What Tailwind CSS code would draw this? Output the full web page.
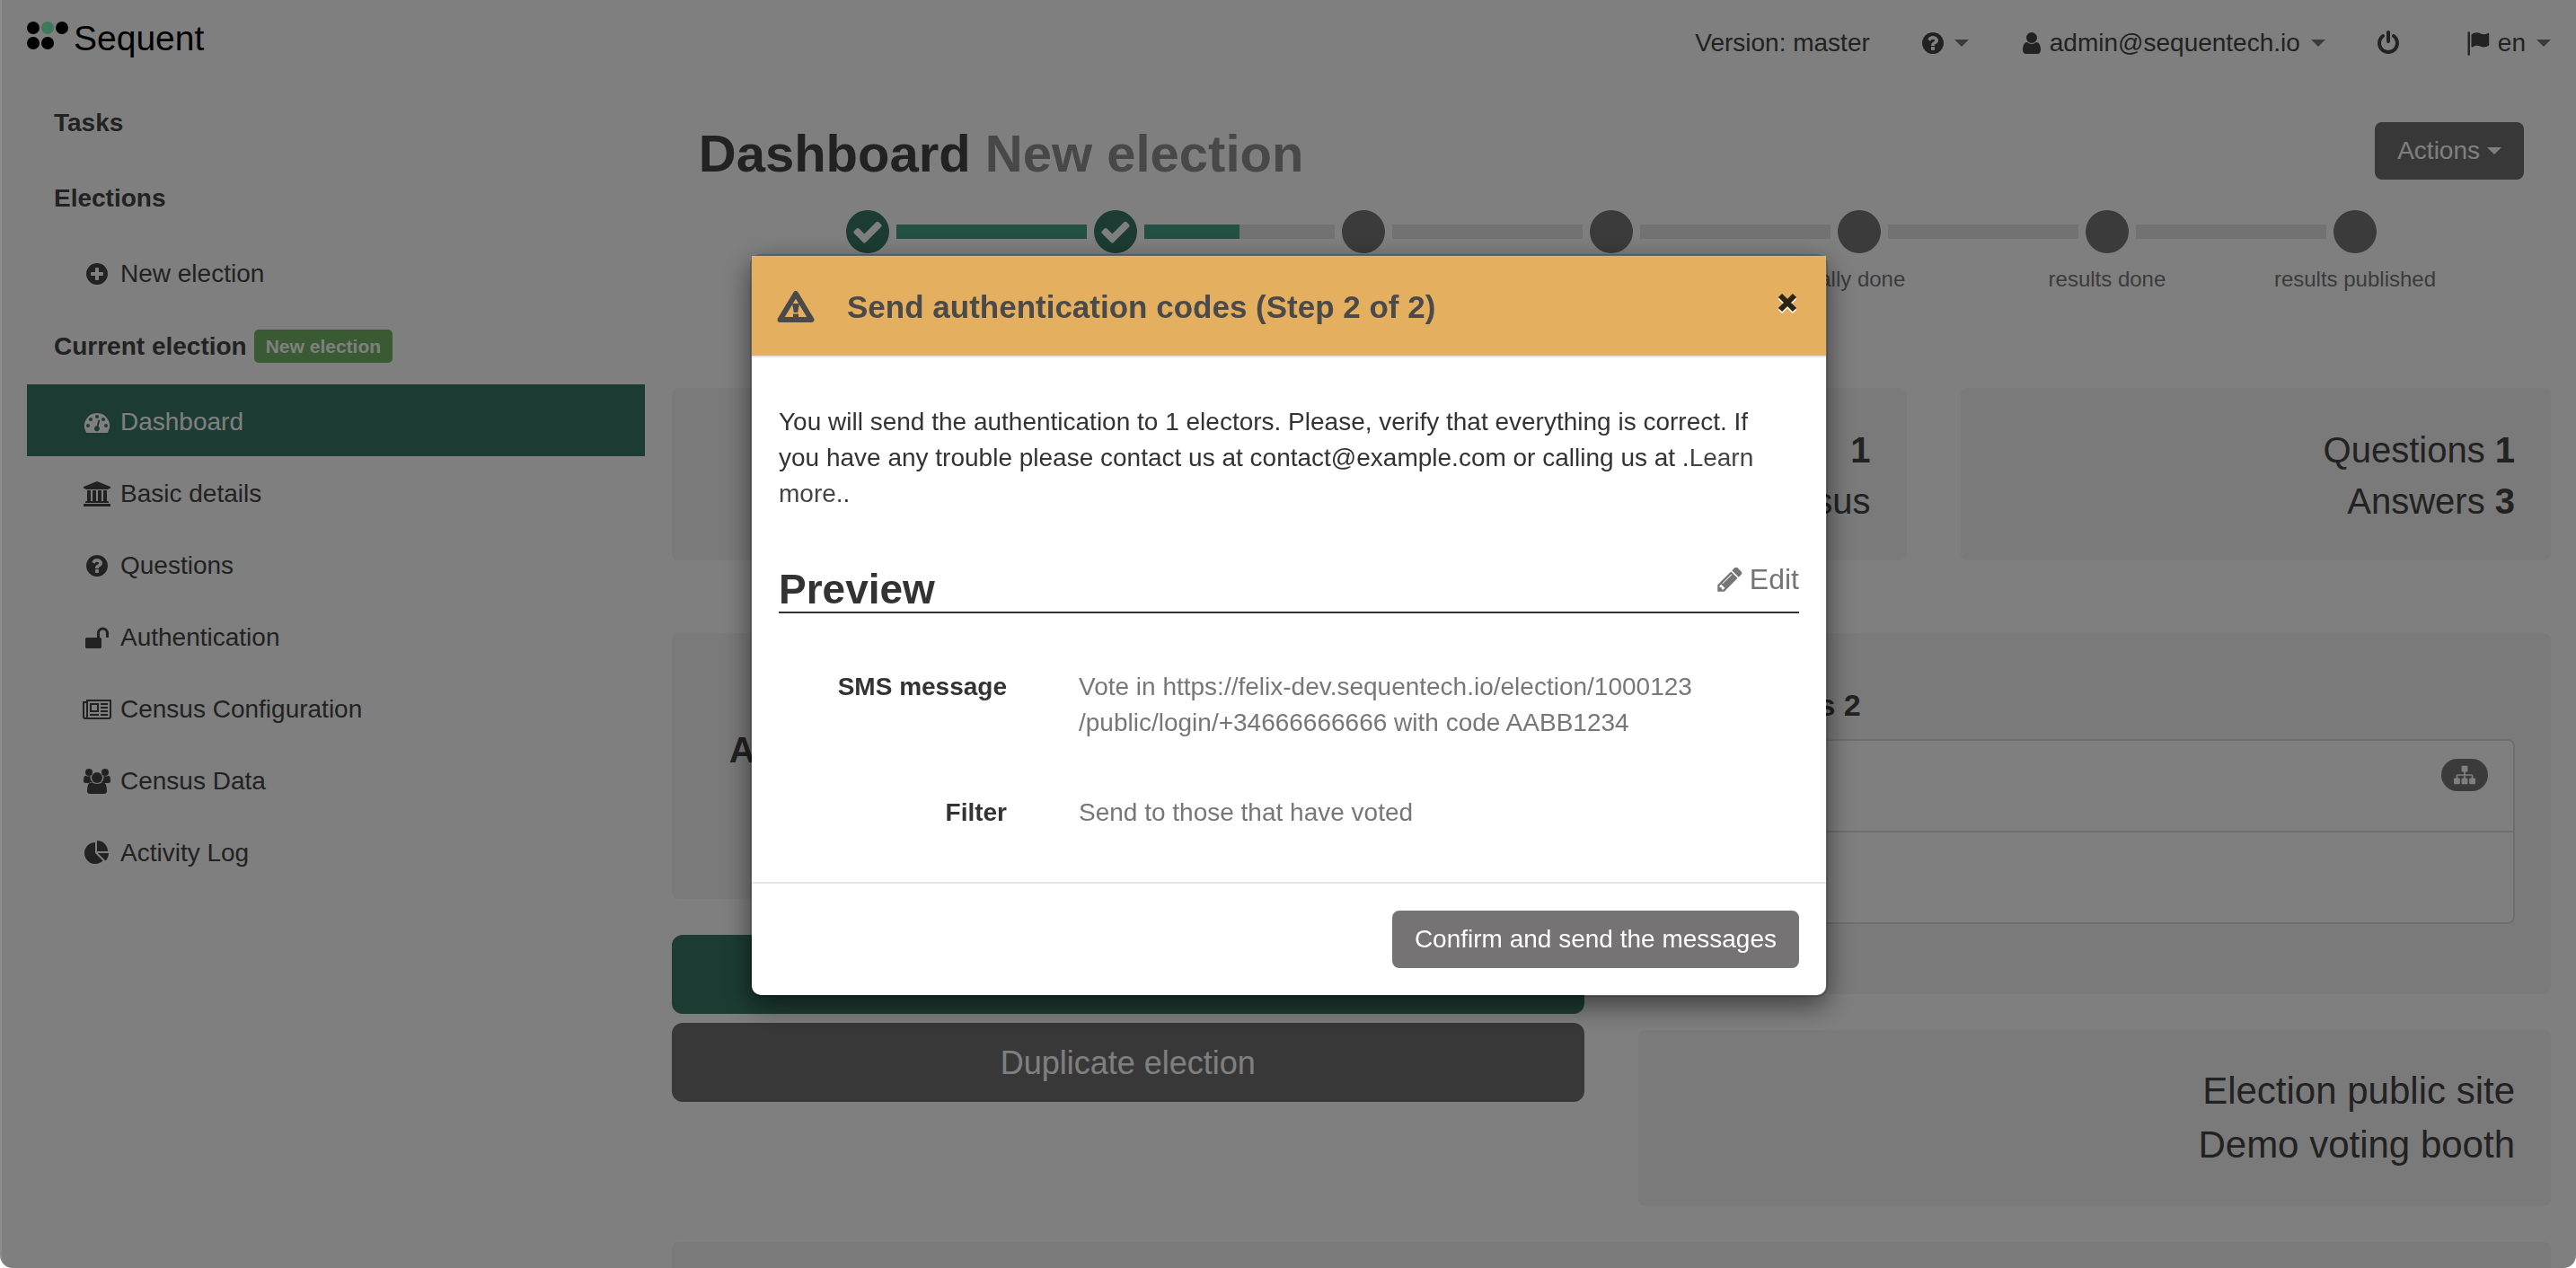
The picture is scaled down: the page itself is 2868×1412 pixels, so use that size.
<!DOCTYPE html>
<html lang="en">
<head>
<meta charset="utf-8">
<meta name="viewport" content="width=device-width, initial-scale=1">
<title>Sequent - Dashboard</title>
<script src="https://cdn.jsdelivr.net/npm/@tailwindcss/browser@4"></script>
</head>
<body class="h-screen overflow-hidden bg-white pl-px font-['Liberation_Sans',Arial,sans-serif] text-[28px] leading-10 text-[#444]">

<!-- icon set -->
<svg class="hidden" xmlns="http://www.w3.org/2000/svg">
  <symbol id="i-question" viewBox="0 0 1792 1792"><path d="M1024 1376v-192q0-14-9-23t-23-9h-192q-14 0-23 9t-9 23v192q0 14 9 23t23 9h192q14 0 23-9t9-23zm256-672q0-88-55.5-163t-138.5-116-170-41q-243 0-371 213-15 24 8 42l132 100q7 6 19 6 16 0 25-12 53-68 86-92 34-24 86-24 48 0 85.5 26t37.5 59q0 38-20 61t-68 45q-63 28-115.5 86.5t-52.5 125.5v36q0 14 9 23t23 9h192q14 0 23-9t9-23q0-19 21.5-49.5t54.5-49.5q32-18 49-28.5t46-35 44.5-48 28-60.5 12.5-81zm384 192q0 209-103 385.5t-279.5 279.5-385.5 103-385.5-103-279.5-279.5-103-385.5 103-385.5 279.5-279.5 385.5-103 385.5 103 279.5 279.5 103 385.5z"/></symbol>
  <symbol id="i-plus" viewBox="0 0 1792 1792"><path d="M1344 960v-128q0-26-19-45t-45-19h-256v-256q0-26-19-45t-45-19h-128q-26 0-45 19t-19 45v256h-256q-26 0-45 19t-19 45v128q0 26 19 45t45 19h256v256q0 26 19 45t45 19h128q26 0 45-19t19-45v-256h256q26 0 45-19t19-45zm320-64q0 209-103 385.5t-279.5 279.5-385.5 103-385.5-103-279.5-279.5-103-385.5 103-385.5 279.5-279.5 385.5-103 385.5 103 279.5 279.5 103 385.5z"/></symbol>
  <symbol id="i-user" viewBox="0 0 1792 1792"><path d="M1536 1399q0 109-62.5 187t-150.5 78h-854q-88 0-150.5-78t-62.5-187q0-85 8.5-160.5t31.5-152 58.5-131 94-89 134.5-34.5q131 128 313 128t313-128q76 0 134.5 34.5t94 89 58.5 131 31.5 152 8.5 160.5zm-256-887q0 159-112.5 271.5t-271.5 112.5-271.5-112.5-112.5-271.5 112.5-271.5 271.5-112.5 271.5 112.5 112.5 271.5z"/></symbol>
  <symbol id="i-power" viewBox="0 0 1792 1792"><path d="M1664 896q0 156-61 298t-164 245-245 164-298 61-298-61-245-164-164-245-61-298q0-182 80.5-343t226.5-270q43-32 95.5-25t83.5 50q32 42 24.5 94.5t-49.5 84.5q-98 74-151.5 181t-53.5 228q0 104 40.5 198.5t109.5 163.5 163.5 109.5 198.5 40.5 198.5-40.5 163.5-109.5 109.5-163.5 40.5-198.5q0-121-53.5-228t-151.5-181q-42-32-49.5-84.5t24.5-94.5q31-43 84-50t95 25q146 109 226.5 270t80.5 343zm-640-768v640q0 52-38 90t-90 38-90-38-38-90v-640q0-52 38-90t90-38 90 38 38 90z"/></symbol>
  <symbol id="i-flag" viewBox="0 0 28 28"><path d="M2.500 2.500a1.200 1.200 0 0 1 2.400 0v24.500a.8.8 0 0 1-.8.8h-.8a.8.800 0 0 1-.8-.8zM6.500 4.500c3-2 6.500-3 10-1.200 3.200 1.700 5.800 1 8.300-.4.8-.4 1.400 0 1.400.8v12.300c0 .5-.2.8-.7 1.100-3 1.700-6 2.100-9.200.5-3-1.500-5.600-1-8.700.8-.7.4-1.100.1-1.100-.6z"/></symbol>
  <symbol id="i-pencil" viewBox="0 0 1792 1792"><path d="M491 1536l91-91-235-235-91 91v107h128v128h107zm523-928q0-22-22-22-10 0-17 7l-542 542q-7 7-7 17 0 22 22 22 10 0 17-7l542-542q7-7 7-17zm-54-192l416 416-832 832h-416v-416zm683 96q0 53-37 90l-166 166-416-416 166-165q36-38 90-38 53 0 91 38l235 234q37 39 37 91z"/></symbol>
  <symbol id="i-pie" viewBox="0 0 1792 1792"><path d="M768 890l546 546q-106 108-247.5 168t-298.5 60q-209 0-385.5-103t-279.5-279.5-103-385.5 103-385.5 279.5-279.5 385.500-103v762zm187 6h773q0 157-60 298.500t-168 247.500zm709-128h-768v-768q209 0 385.500 103t279.500 279.500 103 385.500z"/></symbol>
  <symbol id="i-sitemap" viewBox="0 0 1792 1792"><path d="M1792 1248v320q0 40-28 68t-68 28h-320q-40 0-68-28t-28-68v-320q0-40 28-68t68-28h96v-192h-512v192h96q40 0 68 28t28 68v320q0 40-28 68t-68 28h-320q-40 0-68-28t-28-68v-320q0-40 28-68t68-28h96v-192h-512v192h96q40 0 68 28t28 68v320q0 40-28 68t-68 28h-320q-40 0-68-28t-28-68v-320q0-40 28-68t68-28h96v-192q0-52 38-90t90-38h512v-192h-96q-40 0-68-28t-28-68v-320q0-40 28-68t68-28h320q40 0 68 28t28 68v320q0 40-28 68t-68 28h-96v192h512q52 0 90 38t38 90v192h96q40 0 68 28t28 68z"/></symbol>
  <symbol id="i-gauge" viewBox="0 0 28 28"><path fill-rule="evenodd" d="M14 4a14 14 0 0 1 11.800 21.500q-.4.500-1 .5H3.200q-.6 0-1-.5A14 14 0 0 1 14 4zM4 16a2 2 0 1 0 0 4 2 2 0 0 0 0-4zM7 9a2 2 0 1 0 0 4 2 2 0 0 0 0-4zM14 6a2 2 0 1 0 0 4 2 2 0 0 0 0-4zM21 9a2 2 0 1 0 0 4 2 2 0 0 0 0-4zM24 16a2 2 0 1 0 0 4 2 2 0 0 0 0-4zM15.300 12l-1.600 6.300a3 3 0 1 0 1.900.5l1.600-6.300a1 1 0 0 0-1.900-.5z"/></symbol>
  <symbol id="i-bank" viewBox="0 0 30 28"><path d="M15 0l15 6v2h-2q0 1-1 1H3Q2 9 2 8H0V6zM4 10h4v12h2V10h4v12h2V10h4v12h2V10h4v12h1q1 0 1 1v1H2v-1q0-1 1-1h1zM1 25h28q1 0 1 1v2H0v-2q0-1 1-1z"/></symbol>
  <symbol id="i-unlock" viewBox="0 0 28 28"><path d="M2.500 14h2V14h9.500V9a6.500 6.500 0 0 1 13 0v4q0 1-1 1h-1q-1 0-1-1V9a3.500 3.500 0 0 0-7 0v5h.5q1.500 0 1.500 1.500v9q0 1.500-1.500 1.500h-15Q1 26 1 24.500v-9Q1 14 2.500 14z"/></symbol>
  <symbol id="i-news" viewBox="0 0 32 28"><path fill-rule="evenodd" d="M4 3h28v19q0 3-3 3H3q-3 0-3-3V5h4zM4 7H2v15q0 1 1 1t1-1zM6 5v17q0 .6-.2 1H29q1 0 1-1V5zM8 7h10v10H8zm2 2v6h6V9zM8 19h10v2H8zM20 7h8v2h-8zM20 11h8v2h-8zM20 15h8v2h-8zM20 19h8v2h-8z"/></symbol>
  <symbol id="i-users" viewBox="0 0 30 28"><circle cx="6" cy="4" r="4"/><circle cx="24" cy="4" r="4"/><circle cx="15" cy="10" r="6"/><path d="M7.500 10q0-1 .2-2Q4 9 2 7.700 0 8 0 13.500 0 16 2.500 16H8q1-1 2-1.200Q7.500 13 7.500 10zM22.500 10q0-1-.2-2Q26 9 28 7.700q2 .3 2 5.800 0 2.500-2.500 2.500H22q-1-1-2-1.200 2.500-1.800 2.500-4.800zM9 15q6 4 12 0 5 0 5 9.500 0 3.500-3.500 3.500h-15Q4 28 4 24.500 4 15 9 15z"/></symbol>
  <symbol id="i-check" viewBox="0 0 1792 1792"><path d="M1671 566q0 40-28 68l-724 724-136 136q-28 28-68 28t-68-28l-136-136-362-362q-28-28-28-68t28-68l136-136q28-28 68-28t68 28l294 295 656-657q28-28 68-28t68 28l136 136q28 28 28 68z"/></symbol>
  <symbol id="i-caret" viewBox="0 0 16 8"><path d="M0 0h16L8 8z"/></symbol>
</svg>

<header class="flex h-[95px] items-start justify-between pl-[29px] pr-7">
  <a href="#" class="flex items-start gap-1.5 pt-5 text-[39px] leading-[46px] text-black">
    <svg class="mt-1 h-[31px] w-[46px]" viewBox="0 0 46 31" aria-hidden="true"><circle cx="7" cy="7" r="7"/><circle cx="23" cy="7" r="7" fill="#78f4b4"/><circle cx="39" cy="7" r="7"/><circle cx="7" cy="24" r="7"/><circle cx="23" cy="24" r="7"/></svg>
    Sequent
  </a>
  <nav class="flex items-center gap-14 pt-7">
    <a href="#">Version: master</a>
    <button class="flex items-center gap-2.5" aria-label="Help"><svg class="size-7 fill-current"><use href="#i-question"/></svg><svg class="h-2 w-4 fill-[#777]"><use href="#i-caret"/></svg></button>
    <button class="flex items-center gap-1.5"><svg class="size-7 fill-current"><use href="#i-user"/></svg>admin@sequentech.io<svg class="ml-1.5 h-2 w-4 fill-[#777]"><use href="#i-caret"/></svg></button>
    <button aria-label="Log out"><svg class="size-7 fill-current"><use href="#i-power"/></svg></button>
    <button class="ml-4 flex items-center gap-2"><svg class="size-7 fill-current"><use href="#i-flag"/></svg>en<svg class="ml-1 h-2 w-4 fill-[#777]"><use href="#i-caret"/></svg></button>
  </nav>
</header>

<div class="flex">
  <aside class="w-1/4 shrink-0 pl-[29px]">
    <nav>
      <h2 class="flex h-[84px] items-center pl-[30px] font-bold">Tasks</h2>
      <h2 class="flex h-[84px] items-center pl-[30px] font-bold">Elections</h2>
      <a href="#" class="flex h-[84px] items-center gap-2 pl-[60px]"><span class="flex w-9 justify-center"><svg class="size-7 fill-current"><use href="#i-plus"/></svg></span>New election</a>
      <h2 class="flex h-[81px] items-center gap-2 pb-1 pl-[30px] font-bold">Current election <span class="rounded-[5px] bg-[#72b464] px-[13px] text-[21px] leading-[37px] text-white">New election</span></h2>
      <a href="#" class="flex h-20 items-center gap-2 bg-[#387866] pl-[60px] pt-1 text-white"><span class="flex w-9 justify-center"><svg class="size-7 fill-current"><use href="#i-gauge"/></svg></span>Dashboard</a>
      <a href="#" class="flex h-20 items-center gap-2 pl-[60px] pt-1"><span class="flex w-9 justify-center"><svg class="h-7 w-[30px] fill-current"><use href="#i-bank"/></svg></span>Basic details</a>
      <a href="#" class="flex h-20 items-center gap-2 pl-[60px] pt-1"><span class="flex w-9 justify-center"><svg class="size-7 fill-current"><use href="#i-question"/></svg></span>Questions</a>
      <a href="#" class="flex h-20 items-center gap-2 pl-[60px] pt-1"><span class="flex w-9 justify-center"><svg class="size-7 fill-current"><use href="#i-unlock"/></svg></span>Authentication</a>
      <a href="#" class="flex h-20 items-center gap-2 pl-[60px] pt-1"><span class="flex w-9 justify-center"><svg class="h-7 w-8 fill-current"><use href="#i-news"/></svg></span>Census Configuration</a>
      <a href="#" class="flex h-20 items-center gap-2 pl-[60px] pt-1"><span class="flex w-9 justify-center"><svg class="h-7 w-[30px] fill-current"><use href="#i-users"/></svg></span>Census Data</a>
      <a href="#" class="flex h-20 items-center gap-2 pl-[60px] pt-1"><span class="flex w-9 justify-center"><svg class="size-7 fill-current"><use href="#i-pie"/></svg></span>Activity Log</a>
    </nav>
  </aside>

  <main class="min-w-0 flex-1 pl-[30px] pr-7">
    <div class="flex items-center justify-between pl-[30px] pr-[30px] pt-[41px]">
      <h1 class="pt-1.5 text-[58px] font-bold leading-[58px]">Dashboard <small class="text-[58px] text-[#919191]">New election</small></h1>
      <button class="flex h-16 items-center gap-2 rounded-lg bg-[#737171] px-[25px] text-white">Actions <svg class="h-2 w-4 fill-current"><use href="#i-caret"/></svg></button>
    </div>

    <!-- election progress -->
    <ol class="mt-[34px] grid grid-cols-7 px-20 text-center text-[24px] leading-[34px] text-[#777]">
      <li class="relative"><span class="mx-auto flex size-12 items-center justify-center rounded-full bg-[#387866]"><svg class="size-9 fill-white"><use href="#i-check"/></svg></span><span class="absolute left-[calc(50%+32px)] right-[calc(32px-50%)] top-4 h-4 bg-[#499f89]"></span><span class="mt-3 block">created</span></li>
      <li class="relative"><span class="mx-auto flex size-12 items-center justify-center rounded-full bg-[#387866]"><svg class="size-9 fill-white"><use href="#i-check"/></svg></span><span class="absolute left-[calc(50%+32px)] right-[calc(32px-50%)] top-4 h-4 bg-[#e5e5e5]"><span class="block h-full w-1/2 bg-[#499f89]"></span></span><span class="mt-3 block">registered</span></li>
      <li class="relative"><span class="mx-auto block size-12 rounded-full bg-[#777]"></span><span class="absolute left-[calc(50%+32px)] right-[calc(32px-50%)] top-4 h-4 bg-[#e5e5e5]"></span><span class="mt-3 block">started</span></li>
      <li class="relative"><span class="mx-auto block size-12 rounded-full bg-[#777]"></span><span class="absolute left-[calc(50%+32px)] right-[calc(32px-50%)] top-4 h-4 bg-[#e5e5e5]"></span><span class="mt-3 block">stopped</span></li>
      <li class="relative"><span class="mx-auto block size-12 rounded-full bg-[#777]"></span><span class="absolute left-[calc(50%+32px)] right-[calc(32px-50%)] top-4 h-4 bg-[#e5e5e5]"></span><span class="mt-3 block">tally done</span></li>
      <li class="relative"><span class="mx-auto block size-12 rounded-full bg-[#777]"></span><span class="absolute left-[calc(50%+32px)] right-[calc(32px-50%)] top-4 h-4 bg-[#e5e5e5]"></span><span class="mt-3 block">results done</span></li>
      <li><span class="mx-auto block size-12 rounded-full bg-[#777]"></span><span class="mt-3 block">results published</span></li>
    </ol>

    <section class="mt-[104px] grid grid-cols-3 gap-[60px] text-right text-[40px] leading-[57px]">
      <div class="rounded-lg bg-[#f4f4f4] px-10 pb-[37px] pt-[41px]"></div>
      <div class="rounded-lg bg-[#f4f4f4] px-10 pb-[37px] pt-[41px]"><p><b>1</b></p><p>Census</p></div>
      <div class="rounded-lg bg-[#f4f4f4] px-10 pb-[37px] pt-[41px]"><p>Questions <b>1</b></p><p>Answers <b>3</b></p></div>
    </section>

    <section class="mt-[81px] grid grid-cols-2 items-start gap-[60px]">
      <div class="flex flex-col">
        <div class="mb-10 flex h-[296px] items-center rounded-lg bg-[#f4f4f4] px-16 pb-9 text-[40px] font-bold">Authentication</div>
        <button class="mb-2.5 h-[88px] rounded-xl bg-[#387866] text-[36px] text-white">Start election</button>
        <button class="h-[88px] rounded-xl bg-[#737171] pt-0.5 text-[36px] text-white">Duplicate election</button>
      </div>
      <div class="flex flex-col gap-10">
        <div class="rounded-lg bg-[#f4f4f4] px-10 pb-[78px] pt-[60px]">
          <h4 class="mb-[18px] text-[34px] font-bold leading-10">Authorities 2</h4>
          <ul class="divide-y-2 divide-[#ddd] rounded-lg border-2 border-[#ddd] bg-white">
            <li class="flex h-[102px] items-start justify-end px-7 pt-5"><span class="flex h-9 w-[52px] items-center justify-center rounded-full bg-[#777]"><svg class="size-6 fill-white"><use href="#i-sitemap"/></svg></span></li>
            <li class="h-[100px]"></li>
          </ul>
        </div>
        <div class="rounded-lg bg-[#f4f4f4] px-10 py-[38px] text-right text-[42px] leading-[60px]">
          <a href="#" class="block">Election public site</a>
          <a href="#" class="block">Demo voting booth</a>
        </div>
      </div>
    </section>
    <section class="mt-10 h-48 rounded-lg bg-[#f4f4f4]"></section>
  </main>
</div>

<!-- modal -->
<div class="fixed inset-0 flex items-start justify-center rounded-b-[14px] border-l-2 border-white/10 bg-black/50 pt-[283px]">
  <div role="dialog" aria-modal="true" aria-labelledby="dialog-title" class="w-[1200px] max-w-full rounded-xl border-2 border-black/20 bg-white bg-clip-padding text-[#333] shadow-[0_10px_30px_rgba(0,0,0,0.5)]">
    <div class="flex h-[113px] items-center border-b-2 border-[#e5e5e5] bg-[#e5af60] px-7 text-[#4a4a4a]">
      <svg class="h-9 w-[42px]" viewBox="0 0 42 36" aria-hidden="true"><path fill="none" stroke="currentColor" stroke-width="6" stroke-linejoin="round" d="M21 4L38.500 33H3.500z"/><path fill="currentColor" d="M17 15h8l-1.800 10h-4.400zM18 26.500h6v4h-6z"/></svg>
      <h3 id="dialog-title" class="ml-9 flex-1 pt-0.5 text-[35px] font-bold leading-[50px]">Send authentication codes (Step 2 of 2)</h3>
      <button aria-label="Close" class="self-start pt-8 text-[#2d2313]"><svg class="mr-0.5 h-10 w-[26px] drop-shadow-[0_2px_0_#fff]" viewBox="0 0 26 40"><path fill="none" stroke="currentColor" stroke-width="6" d="M5 12l16 16M21 12L5 28"/></svg></button>
    </div>
    <div class="px-[30px] pb-[57px] pt-[52px]">
      <p class="pr-8">You will send the authentication to 1 electors. Please, verify that everything is correct. If you have any trouble please contact us at contact@example.com or calling us at .<a href="#" class="text-[#444]">Learn more.</a>.</p>
      <div class="mt-[58px] flex items-start justify-between border-b-2 border-[#333]">
        <h2 class="pt-[3px] text-[46px] font-bold leading-[50px]">Preview</h2>
        <a href="#" class="flex items-center gap-1.5 text-[32px] leading-[34px] text-[#757575]"><svg class="size-8 fill-current"><use href="#i-pencil"/></svg>Edit</a>
      </div>
      <dl class="mt-[62px] grid grid-cols-[254px_1fr] gap-x-20 gap-y-[60px]">
        <dt class="text-right font-bold">SMS message</dt>
        <dd class="text-[#777]">Vote in https://felix-dev.sequentech.io/election/1000123<br>/public/login/+34666666666 with code AABB1234</dd>
        <dt class="text-right font-bold">Filter</dt>
        <dd class="text-[#777]">Send to those that have voted</dd>
      </dl>
    </div>
    <div class="flex justify-end border-t-2 border-[#e5e5e5] p-[30px]">
      <button class="h-16 rounded-lg bg-[#757373] px-[25px] text-white">Confirm and send the messages</button>
    </div>
  </div>
</div>
</body>
</html>
